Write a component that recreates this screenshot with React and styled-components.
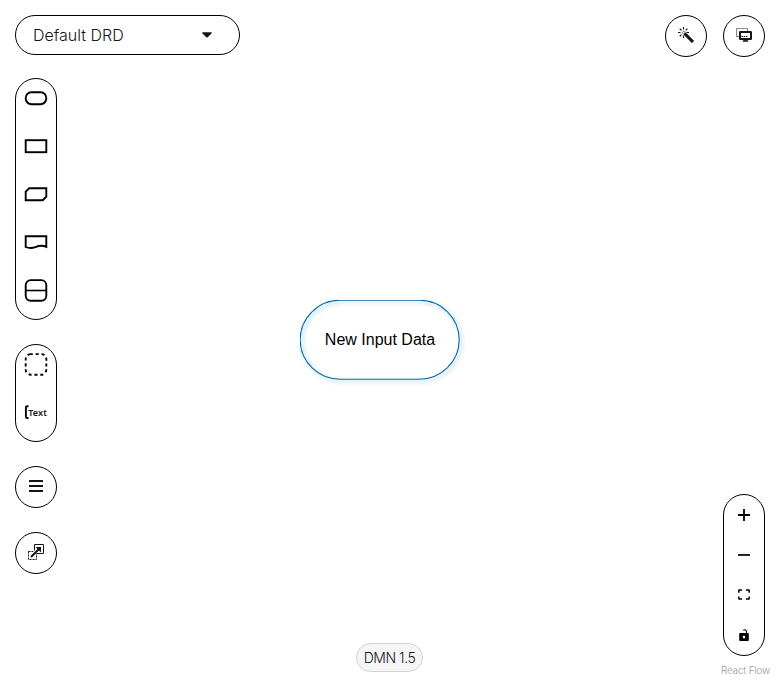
import React from "react";
import styled, { createGlobalStyle } from "styled-components";

const Global = createGlobalStyle`
  * { box-sizing: border-box; }
  body { margin: 0; background: #fff; overflow: hidden; }
  svg { display: block; flex: none; }
`;

const Page = styled.main`
  position: relative;
  display: grid;
  grid-template-columns: 225px 1fr 225px;
  width: 780px;
  height: 680px;
  padding-left: 15px;
  font-family: Inter, "Liberation Sans", sans-serif;
  color: #151515;
`;

const LeftColumn = styled.div`
  display: flex;
  flex-direction: column;
  align-items: flex-start;
  gap: 24px;
  padding-top: 15px;
`;

const CenterColumn = styled.div`
  display: flex;
  align-items: flex-end;
  padding: 0 0 8px 116px;
`;

const RightColumn = styled.div`
  display: flex;
  flex-direction: column;
  align-items: flex-end;
  padding: 15px 15px 0 0;
`;

const DrdSelect = styled.button`
  display: flex;
  align-items: center;
  justify-content: space-between;
  width: 225px;
  height: 40px;
  margin-bottom: -1px;
  padding: 0 27px 1px 17px;
  border: 1px solid #000;
  border-radius: 20px;
  background: #fff;
  color: #151515;
  font: 300 16px/24px Inter, sans-serif;
  letter-spacing: 0;
`;

const Palette = styled.section`
  display: flex;
  flex-direction: column;
  align-items: center;
  width: 42px;
  height: ${(p) => p.$height}px;
  border: 1px solid #000;
  border-radius: 21px;
  background: #fff;
`;

const Tool = styled.button`
  display: flex;
  align-items: center;
  justify-content: center;
  width: 40px;
  height: ${(p) => p.$height || 48}px;
  padding: 0;
  border: 0;
  background: none;
  color: #000;
`;

const NodeTools = styled(Palette)`
  & > ${Tool} { padding-bottom: 10px; }
`;

const RoundButton = styled.button`
  display: flex;
  align-items: center;
  justify-content: center;
  width: 42px;
  height: 42px;
  padding: 0 0 ${(p) => (p.$raised ? 2 : 0)}px;
  border: 1px solid #000;
  border-radius: 50%;
  background: #fff;
  color: #151515;
`;

const TopActions = styled.div`
  display: flex;
  gap: 16px;
`;

const ZoomControls = styled(Palette)`
  margin-top: auto;
`;

const Attribution = styled.div`
  height: 24px;
  margin-right: -5px;
  padding-top: 8px;
  color: #999;
  font: 300 10px/12px Inter, sans-serif;
  letter-spacing: -0.2px;
  white-space: nowrap;
`;

const VersionBadge = styled.div`
  display: flex;
  align-items: center;
  justify-content: center;
  width: 67px;
  height: 29px;
  padding-bottom: 1px;
  border: 1px solid #d2d2d2;
  border-radius: 15px;
  background: #f5f5f5;
  color: #151515;
  font: 300 14px/21px Inter, sans-serif;
  letter-spacing: -0.45px;
  white-space: nowrap;
`;

const DiagramNode = styled.div`
  position: absolute;
  left: 300px;
  top: 300px;
  width: 160px;
  height: 80px;
  display: grid;
  place-items: center;
  color: #000;
  font: 16px/24px "Liberation Sans", Arial, sans-serif;
  & > * { grid-area: 1 / 1; }
`;

const NodeShape = styled.svg`
  filter: drop-shadow(2px 2px 2px rgba(0, 125, 190, 0.5));
`;

const ToolIcon = ({ children }) => (
  <svg width="24" height="24" viewBox="0 0 24 24" fill="none" stroke="#000" strokeWidth="1.9">{children}</svg>
);

const ActionIcon = ({ children }) => (
  <svg width="16" height="16" viewBox="0 0 16 16" fill="none" stroke="#151515">{children}</svg>
);

export default function App() {
  return (
    <>
      <Global />
      <Page>
        <DiagramNode>
          <NodeShape width="160" height="80">
            <rect x="0.2" y="0.2" width="159" height="79" rx="40" ry="40" fill="none" stroke="#006ba4" strokeWidth="1.1" />
          </NodeShape>
          <span>New Input Data</span>
        </DiagramNode>

        <LeftColumn>
          <DrdSelect>
            Default DRD
            <svg width="10" height="6" viewBox="0 0 10 6"><path d="M.7 .3h8.6q.9.4.2 1.2L5.7 5.3q-.7.6-1.4 0L.5 1.5Q-.2.7.7.3Z" fill="#151515" /></svg>
          </DrdSelect>
          <NodeTools $height={242}>
            <Tool aria-label="Input data"><ToolIcon><rect x="1.7" y="6.2" width="20.6" height="12" rx="5.7" /></ToolIcon></Tool>
            <Tool aria-label="Decision"><ToolIcon><rect x="1.7" y="6.2" width="20.6" height="12" /></ToolIcon></Tool>
            <Tool aria-label="Knowledge model"><ToolIcon><path d="M5.2 6.2H22.3v8.4L18.8 18.2H1.7V9.6Z" /></ToolIcon></Tool>
            <Tool aria-label="Knowledge source"><ToolIcon><path d="M1.7 6.2H22.3v10.7C17 14.5 14 16 11.5 17.2C8 18.3 4.5 18.2 1.7 17Z" /></ToolIcon></Tool>
            <Tool aria-label="Decision service"><ToolIcon><rect x="1.7" y="2.1" width="20.6" height="20.6" rx="5" /><path d="M2 12.5h20" strokeWidth="1.6" /></ToolIcon></Tool>
          </NodeTools>
          <NodeTools $height={98}>
            <Tool aria-label="Group"><ToolIcon><rect x="1.7" y="2.1" width="20.6" height="20.6" rx="5" strokeDasharray="3.1 2.8" strokeDashoffset="1" /></ToolIcon></Tool>
            <Tool aria-label="Text annotation">
              <ToolIcon>
                <path d="M4.5 6.2H3.2Q1.9 6.2 1.9 7.5V16.7Q1.9 18 3.2 18H4.5" />
                <text x="4.2" y="16" fontFamily="Noto Sans, sans-serif" fontWeight="600" fontSize="9" textLength="18.6" fill="#151515" stroke="none">Text</text>
              </ToolIcon>
            </Tool>
          </NodeTools>
          <RoundButton $raised aria-label="Nodes list">
            <ActionIcon><path d="M1 3h14M1 8h14M1 13h14" strokeWidth="2.2" /></ActionIcon>
          </RoundButton>
          <RoundButton $raised aria-label="External nodes">
            <ActionIcon>
              <path d="M6.5 .5h9v9h-9Z" />
              <path d="M.5 7.5h8v8h-8Z" strokeDasharray="2 1" />
              <path d="M3 12.5 10.5 5" stroke="#fff" strokeWidth="3.5" />
              <path d="M3 13 11 5" strokeWidth="2.1" />
              <path d="M7.5 3h5.5v5.5Z" fill="#151515" stroke="none" />
            </ActionIcon>
          </RoundButton>
        </LeftColumn>

        <CenterColumn><VersionBadge>DMN 1.5</VersionBadge></CenterColumn>

        <RightColumn>
          <TopActions>
            <RoundButton $raised aria-label="Autolayout">
              <ActionIcon>
                <path d="M6.7 6.7 15 15" strokeWidth="3.1" />
                <path d="M5.5 0v2.5M1.7 1.7l1.8 1.7M9.3 1.7 7.8 3.4M0 5.5h2.5M8.5 5.5h2.5M1.7 9.3l1.8-1.7M5.5 8.5v2.5" strokeWidth="1.2" />
                <path d="m4.3 5.6 1.4-1.4 1.6 1.4-1.6 1.5Z" strokeWidth=".7" />
              </ActionIcon>
            </RoundButton>
            <RoundButton $raised aria-label="Overlays">
              <svg width="16" height="16" viewBox="0 0 16 16" fill="none" stroke="#151515">
                <path d="M2.5 9.5h-2v-8h11v2" strokeDasharray="1 1" strokeWidth="1.2" />
                <rect x="4" y="5" width="11" height="7" rx=".3" strokeWidth="2" />
                <path d="M5.5 9.5h6" strokeDasharray="1.5 .7" />
                <path d="M9.5 12v2M6.8 14h5.4" strokeWidth="1.6" />
              </svg>
            </RoundButton>
          </TopActions>
          <ZoomControls $height={162}>
            <Tool $height={40} aria-label="Zoom in"><svg width="12" height="12" viewBox="0 0 12 12"><path d="M5.1 0h1.8v5.1H12v1.8H6.9V12H5.1V6.9H0V5.1h5.1Z" /></svg></Tool>
            <Tool $height={40} aria-label="Zoom out"><svg width="12" height="2" viewBox="0 0 12 2"><path d="M0 .1h12v1.7H0Z" /></svg></Tool>
            <Tool $height={40} aria-label="Fit view"><svg width="12" height="12" viewBox="0 0 12 12" fill="none" stroke="#000" strokeWidth="1.5"><path d="M.8 3.8V1.6q0-.5.5-.5H4M8 1.1h2.7q.5 0 .5.5v2.2M11.2 7.4v2.2q0 .5-.5.5H8M4 10.1H1.3q-.5 0-.5-.5V7.4" /></svg></Tool>
            <Tool $height={40} aria-label="Toggle interactivity"><svg width="10" height="12" viewBox="0 0 10 12"><path d="M4.2 1.2Q7.5-.2 7.5 3v2" fill="none" stroke="#000" strokeWidth="1.1" /><path fillRule="evenodd" d="M1.2 4.1h7.6q1 0 1 1v5.9q0 1-1 1H1.2q-1 0-1-1V5.1q0-1 1-1ZM5 6.8a1.3 1.3 0 1 0 0 2.6a1.3 1.3 0 1 0 0-2.6Z" /></svg></Tool>
          </ZoomControls>
          <Attribution>React Flow</Attribution>
        </RightColumn>
      </Page>
    </>
  );
}
